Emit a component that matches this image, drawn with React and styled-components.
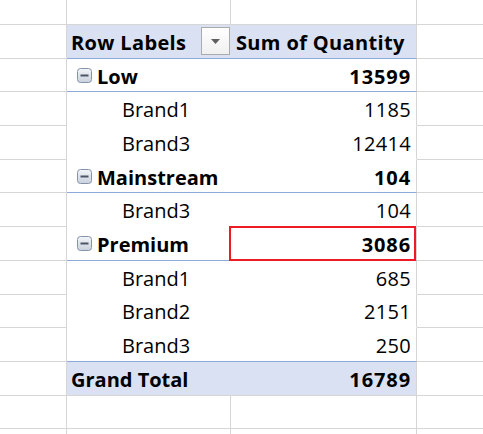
import React from "react";
import styled, { createGlobalStyle, css } from "styled-components";

const GlobalStyle = createGlobalStyle`
  html, body {
    margin: 0;
    padding: 0;
    background: #ffffff;
    overflow: hidden;
  }
  body {
    font-family: "Open Sans", "Liberation Sans", sans-serif;
    color: #000;
  }
`;

const GRID = "#d6d6d6";
const BLUE = "#8eaadb";
const FILL = "#d9e1f2";

const rows = [
  { type: "cat", label: "Low", value: 13599 },
  { type: "item", label: "Brand1", value: 1185 },
  { type: "item", label: "Brand3", value: 12414 },
  { type: "cat", label: "Mainstream", value: 104 },
  { type: "item", label: "Brand3", value: 104 },
  { type: "cat", label: "Premium", value: 3086, marked: true },
  { type: "item", label: "Brand1", value: 685 },
  { type: "item", label: "Brand2", value: 2151 },
  { type: "item", label: "Brand3", value: 250 },
  { type: "total", label: "Grand Total", value: 16789 },
];

function Sheet() {
  return (
    <Grid>
      {/* blank row above the pivot */}
      <Cell />
      <Cell />
      <Cell />
      <Cell $last />

      {/* pivot header */}
      <Cell />
      <LabelCell $kind="header">
        <HeadText>Row Labels</HeadText>
        <FilterButton>
          <svg width="9" height="5" viewBox="0 0 9 5">
            <path d="M0 0 H9 L4.5 5 Z" fill="#5f5f5f" />
          </svg>
        </FilterButton>
      </LabelCell>
      <ValueCell $kind="header">
        <HeadText>Sum of Quantity</HeadText>
      </ValueCell>
      <Cell $last />

      {rows.map((row, i) => {
        const beforeTotal = rows[i + 1] && rows[i + 1].type === "total";
        return (
          <React.Fragment key={i}>
            <Cell />
            <LabelCell $kind={row.type} $rule={beforeTotal}>
              {row.type === "cat" && <Collapse />}
              <Label $kind={row.type}>{row.label}</Label>
            </LabelCell>
            <ValueCell $kind={row.type} $rule={beforeTotal} $marked={row.marked}>
              <Value $kind={row.type}>{row.value}</Value>
            </ValueCell>
            <Cell $last />
          </React.Fragment>
        );
      })}

      {/* empty rows below */}
      {[0, 1].map((n) => (
        <React.Fragment key={"e" + n}>
          <Cell />
          <Cell />
          <Cell />
          <Cell $last />
        </React.Fragment>
      ))}
    </Grid>
  );
}

function Collapse() {
  return (
    <MinusBox>
      <svg width="15" height="15" viewBox="0 0 15 15">
        <defs>
          <linearGradient id="mg" x1="0" y1="0" x2="0" y2="1">
            <stop offset="0" stopColor="#f4f6f9" />
            <stop offset="1" stopColor="#c9d1dd" />
          </linearGradient>
        </defs>
        <rect x="0.5" y="0.5" width="14" height="14" rx="3" fill="url(#mg)" stroke="#8593aa" />
        <rect x="3.5" y="6.5" width="8" height="2" fill="#4c5668" />
      </svg>
    </MinusBox>
  );
}

export default function App() {
  return (
    <>
      <GlobalStyle />
      <Sheet />
    </>
  );
}

const Grid = styled.div`
  display: grid;
  grid-template-columns: 67px 164px 186px 1fr;
  grid-template-rows: 25px repeat(13, 33.7px);
  width: 483px;
  height: 434px;
  overflow: hidden;
`;

const Cell = styled.div`
  box-sizing: border-box;
  border-bottom: 1px solid ${GRID};
  border-right: ${(p) => (p.$last ? "none" : `1px solid ${GRID}`)};
`;

const pivotCell = css`
  box-sizing: border-box;
  display: flex;
  align-items: center;
  position: relative;
  background: ${(p) => (p.$kind === "header" || p.$kind === "total" ? FILL : "#fff")};
  border-bottom: 1px solid
    ${(p) =>
      p.$kind === "header" || p.$kind === "cat" || p.$rule
        ? BLUE
        : p.$kind === "total"
        ? GRID
        : "transparent"};
`;

const LabelCell = styled.div`
  ${pivotCell};
  padding-left: ${(p) => (p.$kind === "cat" ? "10px" : p.$kind === "item" ? "55px" : "4px")};
  padding-top: 2px;
`;

const ValueCell = styled.div`
  ${pivotCell};
  justify-content: ${(p) => (p.$kind === "header" ? "flex-start" : "flex-end")};
  padding: 2px 5px 0 5px;
  border-right: 1px solid ${GRID};

  ${(p) =>
    p.$marked &&
    css`
      &::after {
        content: "";
        position: absolute;
        left: -2px;
        top: -1px;
        right: 0;
        bottom: -1px;
        border: 2px solid #ee1b24;
      }
    `}
`;

const HeadText = styled.span`
  font-size: 20px;
  font-weight: 700;
  white-space: nowrap;
  letter-spacing: 0.35px;
`;

const FilterButton = styled.div`
  box-sizing: border-box;
  margin-left: auto;
  margin-right: 1px;
  width: 29px;
  height: 28px;
  border: 1px solid #ababab;
  background: linear-gradient(#ffffff, #f0f0f0);
  display: flex;
  align-items: center;
  justify-content: center;
  margin-top: -2px;
`;

const MinusBox = styled.span`
  display: inline-flex;
  margin-right: 5px;
  margin-top: -2px;
`;

const Label = styled.span`
  font-size: 20px;
  font-weight: ${(p) => (p.$kind === "item" ? 400 : 700)};
  white-space: nowrap;
`;

const Value = styled.span`
  font-size: 20px;
  font-weight: ${(p) => (p.$kind === "item" ? 400 : 700)};
  letter-spacing: ${(p) => (p.$kind === "item" ? "0.3px" : "0.9px")};
`;
